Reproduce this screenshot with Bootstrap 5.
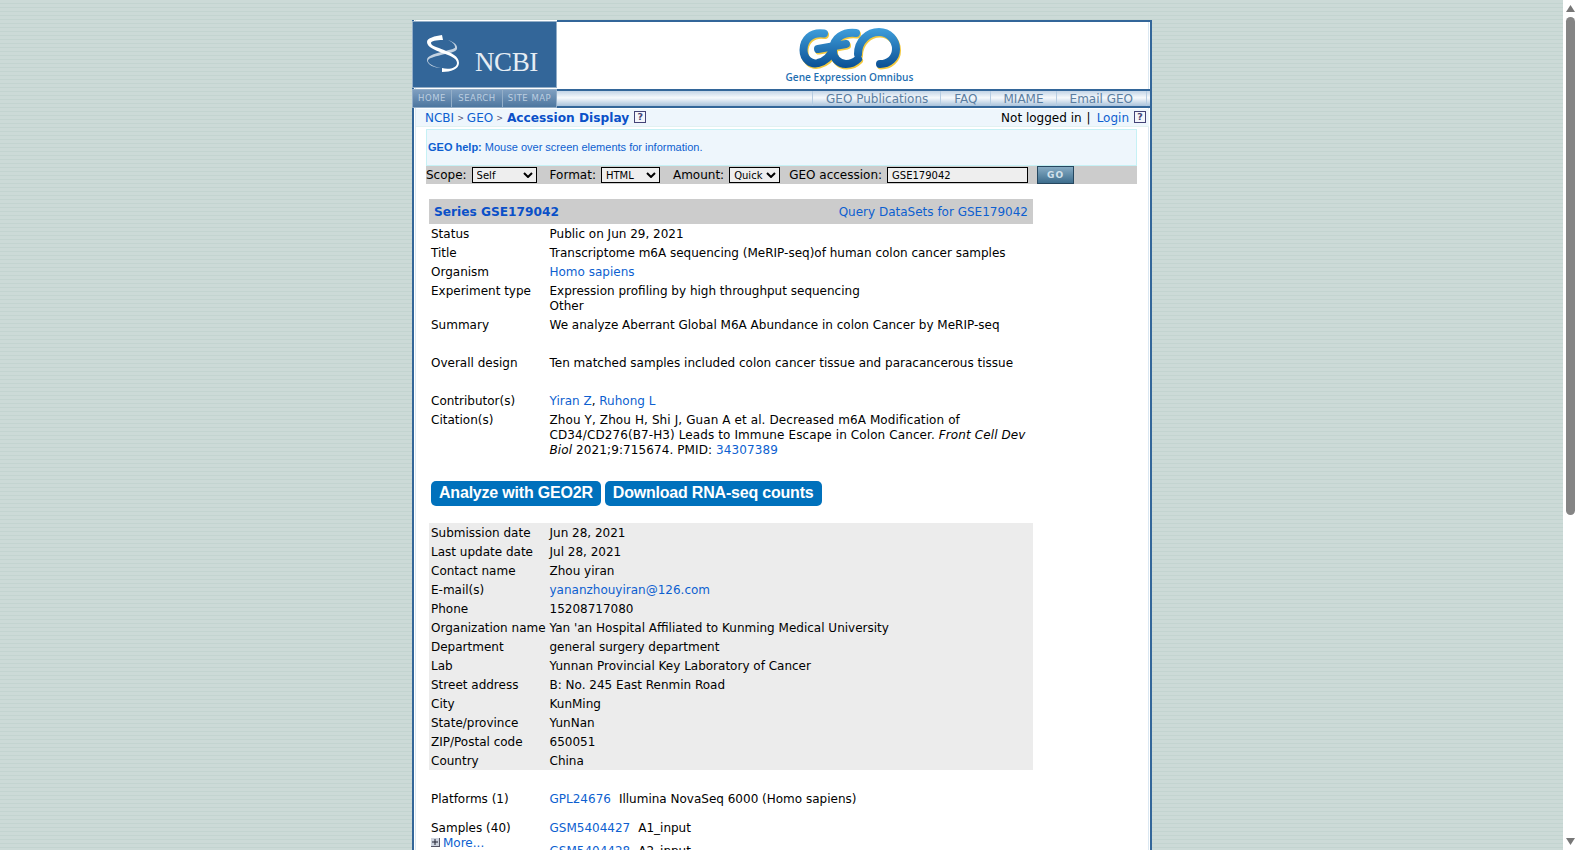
<!DOCTYPE html>
<html lang="en">
<head>
  <meta charset="UTF-8" />
  <title>GEO Accession viewer</title>
  <link href="https://cdn.jsdelivr.net/npm/bootstrap@5.3.0/dist/css/bootstrap.min.css" rel="stylesheet">
  <style>
    html, body { height: 100%; }
    body {
      margin: 0;
      overflow: hidden;
      color: #000;
      font-family: "DejaVu Sans", Verdana, sans-serif;
      font-size: 12px;
      line-height: 15px;
    }
    a { color: #0d5fd0; text-decoration: none; }

    .page-view {
      height: 100%;
      overflow: hidden;
      padding-left: 1px;
      background-color: #ccdad7;
      background-image: repeating-linear-gradient(to bottom, #ccdad7 0, #ccdad7 3px, #c3d4d0 3px, #c3d4d0 4px);
    }
    .scroll-rail { width: 15px; height: 100%; background: #fff; }
    .scroll-thumb { width: 9px; height: 498px; margin: 0 3px; background: #858585; border-radius: 5px; }
    .scroll-arrow { display: block; margin: 5px 3px; }

    .geo-page {
      width: 740px;
      margin: 20px auto 0;
      padding-bottom: 500px;
      background-color: #fff;
      background-image: linear-gradient(#dbe8f2, #dbe8f2), linear-gradient(#dbe8f2, #dbe8f2);
      background-size: 1px 100%;
      background-position: left 1px top, right 1px top;
      background-repeat: no-repeat;
      border: solid #369;
      border-width: 0 2px;
    }

    /* masthead */
    .geo-head { height: 69px; }
    .ncbi-box {
      width: 145px;
      height: 67px;
      margin: 1px 0 0 -2px;
      background: #369;
      border: 1px solid #93aec8;
      color: #fff;
    }
    .ncbi-helix { margin: 13px 0 0 14px; flex-shrink: 0; }
    .ncbi-word { font-family: "Liberation Serif", serif; font-size: 27px; line-height: 27px; margin: 27px 0 0 15px; letter-spacing: -.4px; color: #e6edf4; }
    .geo-banner { border-top: 2px solid #369; padding-right: 8px; }
    .geo-logo { margin-top: 6px; }
    .geo-tagline { font-family: "Open Sans", sans-serif; font-weight: 600; font-size: 10.1px; line-height: 13px; color: #1f6fb2; margin-top: 1px; }

    .geo-navs { height: 19px; }
    .ncbi-nav { width: 145px; margin-left: -2px; background: linear-gradient(#7f9fc0, #4d769f); border: 1px solid #93aec8; }
    .ncbi-nav a {
      color: #bccee0;
      font-size: 8.5px;
      letter-spacing: .5px;
      line-height: 17px;
      border-right: 1px solid #93aec8;
      text-align: center;
    }
    .ncbi-nav a:last-child { border-right: 0; }
    .nav-home { width: 39px; }
    .nav-search { width: 51px; }
    .geo-nav {
      background: linear-gradient(#c3d4e6, #f6f9fc 45%, #a9c2db);
      border-top: 2px solid #369;
      border-bottom: 2px solid #369;
      padding-right: 3px;
    }
    .geo-nav a {
      color: #5b7ea1;
      line-height: 17px;
      font-size: 12px;
      padding: 0 12px 0 13px;
      border-left: 1px solid #b5cce2;
    }
    .geo-nav a:last-child { padding-right: 13px; border-right: 1px solid #b5cce2; }

    .crumb-bar {
      height: 18px;
      margin: 1px 1px 0 2px;
      padding: 1px 3px 0 9px;
      background: #eef6fc;
      border-bottom: 1px solid #e2f1f1;
      color: #000;
    }
    .crumb-sep { font-size: 8px; color: #557; margin: 0 3px; }
    .crumb-now { color: #0a50c8; font-weight: 700; font-size: 12.2px; margin-left: 1px; }
    .help-mark {
      display: inline-block;
      width: 12px;
      height: 12px;
      margin: 0 0 3px 5px;
      line-height: 10px;
      font-size: 9.5px;
      font-weight: 700;
      text-align: center;
      color: #447;
      border: 1px solid #447;
      background: #f4f6fb;
    }
    .login-bar { margin: 0 5px; }
    .login-link { margin-left: 1px; }

    .page-body { padding: 2px 0 0 12px; width: 723px; }
    .help-box {
      height: 37px;
      padding: 0 1px;
      background: #eef6fc;
      border: 1px solid #c6f1f5;
      color: #0d5fd0;
      font-family: "Liberation Sans", Arial, sans-serif;
      font-size: 11px;
    }
    .query-bar { height: 18px; background: #ccc; white-space: nowrap; }
    .query-bar label { margin: 0 5px 0 0; }
    .query-bar label.query-gap { margin-left: 13px; }
    .query-bar label.query-gap-sm { margin-left: 9px; }
    .query-bar select, .query-bar input {
      height: 16px;
      padding: 0 0 0 4px;
      border: 1px solid #000;
      border-radius: 0;
      background-color: #eee;
      color: #000;
      font-family: "DejaVu Sans", Verdana, sans-serif;
      font-size: 10px;
    }
    .query-bar select {
      appearance: none;
      background-image: url("data:image/svg+xml,%3Csvg xmlns='http://www.w3.org/2000/svg' width='10' height='6'%3E%3Cpath d='M1 1l4 4 4-4' fill='none' stroke='%23000' stroke-width='2'/%3E%3C/svg%3E");
      background-repeat: no-repeat;
      background-position: right 3px center;
    }
    .scope-sel { width: 65px; }
    .format-sel { width: 59px; }
    .amount-sel { width: 51px; }
    .accession-in { width: 141px; }
    .go-btn {
      width: 37px;
      height: 18px;
      padding: 0;
      margin-left: 9px;
      border: 1px solid #26475f;
      border-radius: 0;
      background: linear-gradient(#86abc3, #3d6d8d);
      color: #d3e2ec;
      font: 700 9px "DejaVu Sans", sans-serif;
      letter-spacing: 1px;
    }

    .series-wrap { width: 604px; margin: 15px 0 0 3px; }
    .series-head { height: 25px; margin-bottom: 1px; padding: 1px 5px 0; background: #ccc; }
    .series-title { color: #0a50c8; font-weight: 700; font-size: 12.2px; }
    .info-row { display: flex; padding: 2px 0 2px 2px; }
    .info-label { flex: 0 0 118.5px; white-space: nowrap; }
    .info-gap { padding-bottom: 21px; }
    .citation-text { letter-spacing: .1px; }
    .grey-block { height: 247px; padding-top: 1px; background: #ececec; }
    .btn-row { margin: 21px 0 17px 2px; }
    .geo-btn {
      height: 25px;
      padding: 0 8px;
      border-radius: 5px;
      background: #0071bc;
      color: #fff;
      font: 700 16px/24px "Liberation Sans", Arial, sans-serif;
      letter-spacing: -.2px;
    }
    .platform-row { margin-top: 20px; }
    .samples-row { margin-top: 10px; }
    .sample-link { margin-right: 8px; }
    .more-link { display: block; }
    .more-box {
      display: inline-block;
      width: 9px;
      height: 9px;
      margin-right: 3px;
      background: #cdd3de;
      border-bottom: 1px solid #556;
      border-right: 1px solid #556;
    }
    .more-box svg { display: block; }
  </style>
</head>
<body class="d-flex">

  <div class="page-view flex-grow-1">
    <div class="geo-page">
      <div class="geo-head d-flex">
        <div class="ncbi-box d-flex">
          <svg class="ncbi-helix" width="33" height="38" viewBox="0 0 33 38" aria-label="NCBI helix">
            <path fill="#fff" d="M15 0 C8 1 0 3 0 7 C0 12 8 15 15 18 C22 20 30 23 30 28 C30 33 22 35 15 33 L15 37 C24 37 32 34 32 28 C32 21 24 18 17 15 C10 12 4 11 4 8 C4 6 9 5 16 5 Z"/>
            <path fill="#fff" opacity=".7" d="M21 5 C27 7 31 10 30 14 C29 17 22 18 14 20 C7 22 1 23 1 26 C1 29 8 32 14 33 C8 33 0 30 0 25 C0 21 7 19 14 17 C21 15 29 14 28 12 C28 9 25 7 21 5 Z"/>
          </svg>
          <div class="ncbi-word">NCBI</div>
        </div>
        <div class="geo-banner flex-grow-1 d-flex flex-column align-items-center">
          <svg class="geo-logo" width="104" height="42" viewBox="0 0 104 42" aria-label="GEO logo">
            <defs>
              <linearGradient id="geoBlue" gradientUnits="userSpaceOnUse" x1="0" y1="0" x2="0" y2="40">
                <stop offset="0" stop-color="#3f9fdc"/>
                <stop offset="1" stop-color="#0b4f93"/>
              </linearGradient>
            </defs>
            <g fill="none" stroke-width="8" stroke-linecap="round">
              <g stroke="#f3c93f" transform="translate(1 1.500)">
                <path d="M26 5.500 C13 3.500 5.500 12 5.500 22 C5.500 31 13 37 20 35 C28 33 33 27 35 21"/>
                <path d="M58 5 C45 3.500 36 10 35 21 C34 30 41 36 48 36 C53 36 57 34 60 31"/>
                <path d="M20 21 L48 16"/>
                <path d="M60 26 C60 13 70 4 81 4 C91 4 98 12 98 21 C98 30 91 36 82 36"/>
              </g>
              <g stroke="url(#geoBlue)">
                <path d="M26 5.500 C13 3.500 5.500 12 5.500 22 C5.500 31 13 37 20 35 C28 33 33 27 35 21"/>
                <path d="M58 5 C45 3.500 36 10 35 21 C34 30 41 36 48 36 C53 36 57 34 60 31"/>
                <path d="M20 21 L48 16"/>
                <path d="M60 26 C60 13 70 4 81 4 C91 4 98 12 98 21 C98 30 91 36 82 36"/>
              </g>
            </g>
          </svg>
          <div class="geo-tagline">Gene Expression Omnibus</div>
        </div>
      </div>

      <div class="geo-navs d-flex">
        <div class="ncbi-nav d-flex">
          <a href="#" class="nav-home">HOME</a>
          <a href="#" class="nav-search">SEARCH</a>
          <a href="#" class="flex-grow-1">SITE MAP</a>
        </div>
        <div class="geo-nav flex-grow-1 d-flex justify-content-end">
          <a href="#">GEO Publications</a>
          <a href="#">FAQ</a>
          <a href="#">MIAME</a>
          <a href="#">Email GEO</a>
        </div>
      </div>

      <div class="crumb-bar d-flex justify-content-between align-items-center">
        <div class="d-flex align-items-center">
          <a href="#">NCBI</a><span class="crumb-sep">&gt;</span><a href="#">GEO</a><span class="crumb-sep">&gt;</span>
          <span class="crumb-now">Accession Display</span>
          <span class="help-mark">?</span>
        </div>
        <div class="d-flex align-items-center">
          Not logged in<span class="login-bar">|</span><a href="#" class="login-link">Login</a><span class="help-mark">?</span>
        </div>
      </div>

      <div class="page-body">
        <div class="help-box d-flex align-items-center"><span><b>GEO help:</b> Mouse over screen elements for information.</span></div>
        <form class="query-bar d-flex align-items-center">
          <label>Scope:</label>
          <select class="scope-sel"><option>Self</option></select>
          <label class="query-gap">Format:</label>
          <select class="format-sel"><option>HTML</option></select>
          <label class="query-gap">Amount:</label>
          <select class="amount-sel"><option>Quick</option></select>
          <label class="query-gap-sm">GEO accession:</label>
          <input class="accession-in" type="text" value="GSE179042">
          <button type="button" class="go-btn">GO</button>
        </form>

        <div class="series-wrap">
          <div class="series-head d-flex justify-content-between align-items-center">
            <span class="series-title">Series GSE179042</span>
            <a href="#">Query DataSets for GSE179042</a>
          </div>

          <div class="info-row"><div class="info-label">Status</div><div>Public on Jun 29, 2021</div></div>
          <div class="info-row"><div class="info-label">Title</div><div>Transcriptome m6A sequencing (MeRIP-seq)of human colon cancer samples</div></div>
          <div class="info-row"><div class="info-label">Organism</div><div><a href="#">Homo sapiens</a></div></div>
          <div class="info-row"><div class="info-label">Experiment type</div><div>Expression profiling by high throughput sequencing<br>Other</div></div>
          <div class="info-row info-gap"><div class="info-label">Summary</div><div>We analyze Aberrant Global M6A Abundance in colon Cancer by MeRIP-seq</div></div>
          <div class="info-row info-gap"><div class="info-label">Overall design</div><div>Ten matched samples included colon cancer tissue and paracancerous tissue</div></div>
          <div class="info-row"><div class="info-label">Contributor(s)</div><div><a href="#">Yiran Z</a>, <a href="#">Ruhong L</a></div></div>
          <div class="info-row"><div class="info-label">Citation(s)</div><div class="citation-text">Zhou Y, Zhou H, Shi J, Guan A et al. Decreased m6A Modification of CD34/CD276(B7-H3) Leads to Immune Escape in Colon Cancer. <i>Front Cell Dev Biol</i> 2021;9:715674. PMID: <a href="#">34307389</a></div></div>

          <div class="btn-row d-flex gap-1">
            <a href="#" class="geo-btn">Analyze with GEO2R</a>
            <a href="#" class="geo-btn">Download RNA-seq counts</a>
          </div>

          <div class="grey-block">
            <div class="info-row"><div class="info-label">Submission date</div><div>Jun 28, 2021</div></div>
            <div class="info-row"><div class="info-label">Last update date</div><div>Jul 28, 2021</div></div>
            <div class="info-row"><div class="info-label">Contact name</div><div>Zhou yiran</div></div>
            <div class="info-row"><div class="info-label">E-mail(s)</div><div><a href="#">yananzhouyiran@126.com</a></div></div>
            <div class="info-row"><div class="info-label">Phone</div><div>15208717080</div></div>
            <div class="info-row"><div class="info-label">Organization name</div><div>Yan 'an Hospital Affiliated to Kunming Medical University</div></div>
            <div class="info-row"><div class="info-label">Department</div><div>general surgery department</div></div>
            <div class="info-row"><div class="info-label">Lab</div><div>Yunnan Provincial Key Laboratory of Cancer</div></div>
            <div class="info-row"><div class="info-label">Street address</div><div>B: No. 245 East Renmin Road</div></div>
            <div class="info-row"><div class="info-label">City</div><div>KunMing</div></div>
            <div class="info-row"><div class="info-label">State/province</div><div>YunNan</div></div>
            <div class="info-row"><div class="info-label">ZIP/Postal code</div><div>650051</div></div>
            <div class="info-row"><div class="info-label">Country</div><div>China</div></div>
          </div>

          <div class="info-row platform-row"><div class="info-label">Platforms (1)</div><div><a href="#" class="sample-link">GPL24676</a>Illumina NovaSeq 6000 (Homo sapiens)</div></div>

          <div class="info-row samples-row">
            <div class="info-label">
              <div>Samples (40)</div>
              <a href="#" class="more-link"><span class="more-box"><svg width="8" height="8" viewBox="0 0 8 8"><path d="M1 4H7M4 1V7" stroke="#223" fill="none"/></svg></span>More...</a>
            </div>
            <div class="d-flex flex-column gap-2">
              <div><a href="#" class="sample-link">GSM5404427</a>A1_input</div>
              <div><a href="#" class="sample-link">GSM5404428</a>A2_input</div>
              <div><a href="#" class="sample-link">GSM5404429</a>A3_input</div>
            </div>
          </div>
        </div>
      </div>
    </div>
  </div>

  <div class="scroll-rail flex-shrink-0 d-flex flex-column">
    <svg class="scroll-arrow" width="9" height="7" viewBox="0 0 9 7"><path d="M4.500 0L9 7H0Z" fill="#777"/></svg>
    <div class="scroll-thumb"></div>
    <svg class="scroll-arrow mt-auto" width="9" height="7" viewBox="0 0 9 7"><path d="M4.500 7L9 0H0Z" fill="#777"/></svg>
  </div>

  <script src="https://cdn.jsdelivr.net/npm/bootstrap@5.3.0/dist/js/bootstrap.bundle.min.js"></script>
</body>
</html>
